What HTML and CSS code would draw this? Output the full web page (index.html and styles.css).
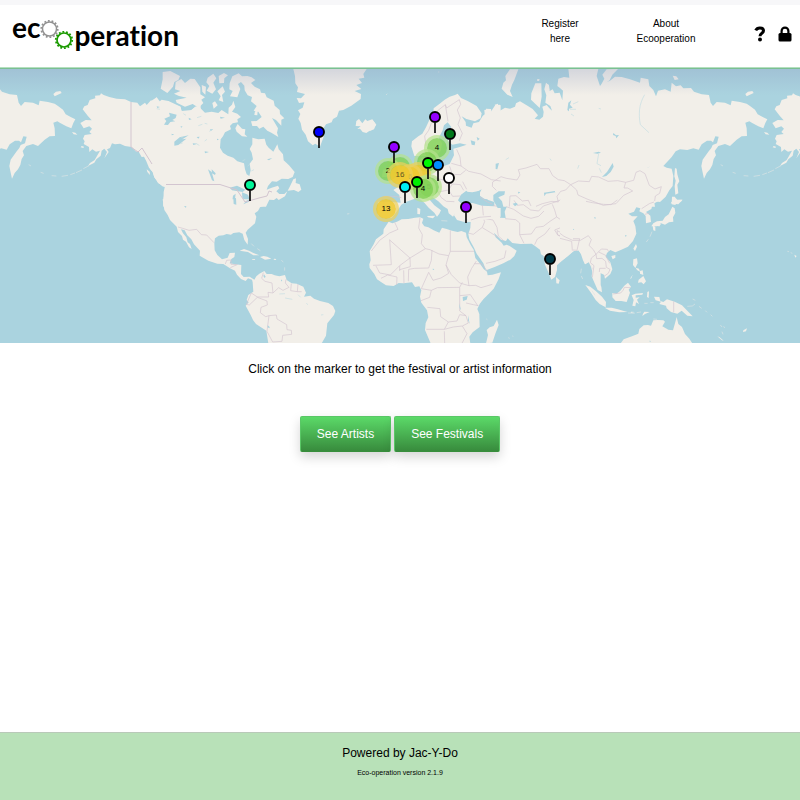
FILE: index.html
```html
<!DOCTYPE html>
<html lang="en">
<head>
<meta charset="utf-8">
<meta name="viewport" content="width=device-width, initial-scale=1">
<title>Ecooperation</title>
<link rel="stylesheet" href="styles.css">
</head>
<body>
<header class="header">
  <a class="logo" href="#" aria-label="Ecooperation home">
    <span class="logo-eco">ec</span>
    <svg class="gears" viewBox="0 0 34 34" aria-hidden="true">
      <g fill="none" stroke="#929292"><circle cx="9.500" cy="11" r="7" stroke-width="1.500"/><circle cx="9.500" cy="11" r="8.200" stroke-width="1.800" stroke-dasharray="1.800 1.880"/></g>
      <g fill="none" stroke="#1b9a00"><circle cx="24" cy="22" r="7" stroke-width="1.700"/><circle cx="24" cy="22" r="8.200" stroke-width="1.800" stroke-dasharray="1.800 1.880"/></g>
    </svg>
    <span class="logo-name">peration</span>
  </a>
  <nav class="nav">
    <a class="nav-link" href="#">Register<br>here</a>
    <a class="nav-link" href="#">About<br>Ecooperation</a>
  </nav>
  <div class="tools">
    <a href="#" aria-label="Help"><svg width="12" height="16" viewBox="0 0 12 16"><path d="M1.700 4.400C2.500 2.700 3.900 1.900 5.800 1.900c2.300 0 3.700 1.200 3.700 2.900C9.500 7.500 6 7 6 10.200" fill="none" stroke="#000" stroke-width="3"/><circle cx="6" cy="13.500" r="2"/></svg></a>
    <a href="#" aria-label="Log in"><svg width="14" height="16" viewBox="0 0 14 16"><path d="M3.600 8V5a3.400 3.400 0 0 1 6.800 0v3" fill="none" stroke="#000" stroke-width="2.200"/><rect x=".5" y="7" width="13" height="8.500" rx="1.500"/></svg></a>
  </div>
</header>
<main class="main">
  <section class="map" aria-label="Festival and artist map">
    <svg class="world" viewBox="0 68 800 275" preserveAspectRatio="xMidYMid slice" aria-hidden="true">
      <defs>
        <g id="siberia" transform="translate(480 66) scale(.33333)">
          <path class="land" d="M0 165L15 155 25 162 45 140 60 134 75 125 90 128 105 122 108 112 120 106 140 118 158 129 174 148 164 158 178 161 189 152 191 138 187 122 200 117 207 125 216 134 211 120 196 110 199 88 193 70 198 50 207 58 209 75 218 70 224 82 239 80 247 103 249 74 240 66 232 60 235 38 252 33 268 35 265 8 355 8 350 30 360 60 373 49 389 45 405 32 425 33 450 40 480 50 482 35 505 40 508 60 520 72 528 91 534 74 555 70 572 77 575 50 588 61 602 58 610 67 633 66 642 77 665 85 687 87 692 110 699 120 710 108 735 110 752 118 755 104 780 108 800 113 810 120 825 131 833 145 848 153 862 160 856 171 850 187 835 181 818 172 808 166 796 170 800 187 801 210 785 211 770 221 750 240 735 234 715 240 704 255 708 268 701 279 697 297 690 310 680 321 672 338 667 315 664 300 668 281 685 257 694 246 698 237 711 232 716 212 706 211 699 229 693 224 681 224 665 235 656 251 640 247 622 252 600 250 587 256 575 273 550 300 560 305 575 308 580 330 578 360 568 373 557 392 540 408 522 405 525 422 0 422Z"/>
          <path class="land" d="M90 10L115 10 103 42 96 56 90 75 98 93 82 86 65 68 70 50 78 43 76 30ZM154 82L166 52 184 52 185 92 179 126 164 112 153 101ZM200 54L206 56 208 72 201 74ZM380 10L414 9 397 26 389 43 360 62 373 38 367 26ZM578 29L589 31 596 40 584 42ZM796 84L804 77 817 75 821 81 808 87 800 91ZM585 306L590 308 592 325 598 346 592 356 595 382 586 386 584 360 587 344 583 331ZM576 392L584 392 592 402 606 401 603 407 591 409 586 417 575 415ZM44 116l10-3 1 7-8 5zM18 128l15 1 2 12-10 11-8-5zM172 39l7 1-2 5-6-1z"/>
        </g>
        <g id="alaska" transform="translate(0 66) scale(.33333)">
          <path class="land" d="M602 422L490 420 490 400 493 385 497 365 488 358 475 352 463 334 458 318 447 305 439 286 432 272 425 273 416 257 407 256 395 243 375 240 360 233 345 235 336 232 330 246 321 250 326 258 313 277 321 258 313 248 305 254 302 269 289 280 283 290 264 300 270 291 284 282 294 265 300 254 288 257 277 250 268 258 267 243 251 234 254 226 249 218 254 207 275 204 268 198 276 188 268 181 251 187 241 171 257 162 275 163 263 149 248 130 253 121 263 117 269 102 286 97 285 89 300 88 303 82 311 87 328 93 350 98 375 100 393 108 412 110 420 121 435 110 440 117 453 103 462 109 470 94 483 111 505 106 520 115 540 122 545 135 575 132 585 122 602 118Z"/>
          <path class="land" d="M488 18L511 15 540 30 535 42 523 48 519 62 502 81 482 68 488 40ZM216 198l10 2 6 6-11-1zM245 240l7 2-2 4-8-2zM440 310l9 7 1 10-8-9zM470 339l12 8 14 17-9-3-14-12z"/>
          <path class="isles" d="M86 296l7 4M122 319l9 3M155 329l14 1M185 331l19-3M211 326l14-5M228 320l18-8M250 308l17-9"/>
        </g>
        <g id="pin"><path d="M6 12v10" stroke="#111" stroke-width="1.700"/><circle cx="6" cy="6" r="5" stroke="#000" stroke-width="1.900"/></g>
        <linearGradient id="shade" x2="0" y2="1"><stop stop-color="#8b98bd" stop-opacity=".3"/><stop offset="1" stop-color="#8b98bd" stop-opacity="0"/></linearGradient>
      </defs>
      <rect x="-800" y="68" width="2400" height="275" fill="#aad3df"/>
      <use href="#siberia"/><use href="#siberia" x="-692"/>
      <use href="#alaska"/><use href="#alaska" x="692"/>

      <!-- Canada, Greenland and Iceland -->
      <g transform="translate(150 66) scale(.33333)">
        <path class="land" d="M0 107L20 94 26 109 35 101 55 105 70 112 92 122 95 137 120 135 132 126 150 125 165 140 185 137 205 141 215 132 235 145 236 125 246 116 250 104 256 123 246 137 262 143 273 153 262 160 264 169 248 172 240 180 243 190 225 199 219 211 212 220 210 245 219 260 233 269 250 275 262 286 282 292 285 310 290 325 298 330 302 313 299 293 309 280 305 260 299 249 307 235 307 215 325 220 344 218 349 236 356 245 370 257 376 246 382 235 386 250 399 265 401 283 417 298 434 318 428 333 415 339 395 338 380 347 366 346 354 360 350 371 365 365 384 359 388 367 379 376 388 384 403 384 412 376 405 391 386 402 380 396 372 402 358 401 348 422 40 422 41 378 45 360 38 352 25 348 13 334 8 318 0 308Z"/>
        <path class="land" d="M77 48L94 39 105 51 121 38 134 39 151 64 151 85 165 94 154 101 160 111 146 125 128 114 105 122 80 110 77 102 110 95 87 90 72 83 91 75 75 70ZM239 52L247 31 266 22 276 31 292 30 305 34 316 42 303 51 314 62 330 70 333 80 345 82 350 94 371 104 374 119 389 132 390 144 403 157 394 161 394 179 378 162 366 156 384 187 381 200 385 213 364 200 352 194 340 182 328 188 321 180 307 180 303 166 320 165 335 153 325 137 311 134 320 120 303 106 306 93 293 88 284 73 283 59 273 48 264 54 271 69 262 94 240 91 248 75 238 70ZM173 35L190 23 199 37 190 50 198 70 187 83 170 74 178 60 169 49ZM206 30L222 21 234 28 223 37 222 51 208 52ZM202 76L218 61 225 77 216 87 220 108 206 103 212 91ZM155 57L168 62 166 86 157 77ZM187 111L195 106 203 118 191 128ZM263 174L276 188 286 190 284 205 292 212 276 211 260 197 256 187ZM315 136L323 133 322 148 313 147ZM430 340L438 337 437 351 449 355 454 371 445 378 432 372 413 374 420 361Z"/>
        <path class="land" d="M430 9L650 9 640 24 643 35 626 38 636 51 619 57 634 69 614 75 633 84 632 99 604 119 580 132 567 134 561 152 549 159 545 169 528 175 519 190 521 212 510 242 496 233 488 238 474 226 467 206 456 191 452 171 445 158 451 144 444 133 458 125 463 109 447 111 440 96 453 97 465 84 441 78 444 64 436 52 435 30ZM619 165L627 159 637 172 646 160 652 165 667 160 679 176 670 187 649 201 638 198 630 188 622 189 632 181 617 180Z"/>
        <path class="lake" d="M43 158l17-7-3-11 23 6-3 10-10 6 9 4-15 2-7 9-12-1 7-11zM73 227l16-13 27-6-19 12 12-2-24 19-12 2zM174 310l11 8 8 28-7-3-8-22zM185 310l12 12-2 5-9-5zM210 152l15 3-13 3zM116 155l9 5-8 2zM128 232l15 1-13 4zM164 256l13 2-12 4zM180 190l10 0-8 5zM239 365l22-6 25 12-8 7-32-5zM257 383l-5 36h-7l4-30zM276 379l18 7 10 25-14-2-13-14zM296 407l20-2 6-4-3 7-24 6zM92 180l6 2-5 3zM140 213l9-1-4 6zM20 121l10 2-8 3zM351 280l16-4-10 7zM65 203l8 3-8 2zM201 218l6 2-6 3z"/>
        <path class="fine-water" d="M20 128l10 2m70 13l8 5m33 7l13-4m-9 28l12-4m7 50l7-5m-31 14l8 4m-55-25l7 4m-9 16l7-2m66-59l8 2m6 22l9-5m90 94l9-5m7 20l6-5m5 20l8-4"/>
      </g>

      <!-- The Americas south of Canada -->
      <g transform="translate(130 200) scale(.33333)">
        <path class="land" d="M98-2L103 30 113 45 120 60 140 80 144 96 156 108 159 119 168 125 177 142 185 147 180 132 173 127 169 112 159 100 153 88 164 91 172 106 184 118 192 133 210 152 209 167 235 182 262 191 280 192 300 205 315 212 321 224 333 237 347 243 354 235 366 239 368 247 370 275 355 285 350 300 356 307 347 317 362 345 369 360 378 372 409 392 415 430 575 430 588 407 592 370 612 345 616 333 609 318 595 309 570 303 552 296 541 287 522 290 528 278 520 260 500 251 485 250 470 240 465 225 448 229 434 226 425 222 410 222 403 213 388 221 379 229 373 239 359 230 341 231 333 222 334 195 315 193 299 190 304 177 313 171 315 158 299 159 293 173 276 178 262 165 254 151 253 130 255 115 266 107 280 106 290 102 303 104 310 99 328 97 338 101 343 120 353 134 354 117 347 98 353 89 375 70 379 50 374 40 384 33 390 22 407 15 411-2Z"/>
        <path class="land" d="M329 152L342 147 357 152 370 159 388 166 370 166 354 156ZM390 171L401 168 412 170 424 176 405 179ZM366 177l8 0 2 3-9-1zM432 176l7 1-2 3-6-1z"/>
        <path class="isles" d="M364 131l8 8m10 7l9 6m63 29l6 5m4 16v10M651 42l7-1"/>
        <path class="border" d="M144 81L158 85 177 91 200 88 214 104 230 105 252 128M286 192L290 181 303 180 303 193 320 194M301 203L323 193M400 218L395 235 405 244 426 249 429 279M468 238L466 249 477 262 459 271 446 263 429 279 414 277 416 291 382 291 364 279 349 313 358 315 382 292 411 303 412 315 393 322 391 338 407 350 417 347 439 345 441 357 470 374 471 389 484 391 485 403 458 406 456 424 428 426 420 411 411 394 417 347M484 251L482 272 502 275 504 252M502 275L515 275"/>
        <path class="lake" d="M402 223l5 7-3 4-4-6zM454 238l3 5-4 1zM413 376l6 5-1 4-5-3zM163 18l6 1-1 4-4-2zM310-5l8-1 1 20-8-2zM340 13l8-10 13-6-4 8z"/>
        <path class="fine-water" d="M465 294l22 4m17-14l8 8m17 18l5 4m39 31l7-1M448 282l17-1"/>
      </g>

      <!-- Africa and southern Asia -->
      <g transform="translate(360 200) scale(.33333)">
        <path class="land" d="M86 65L97 70 111 65 125 58 145 57 165 53 180 52 190 56 186 69 193 79 205 82 221 91 238 98 246 83 260 87 276 92 293 96 304 93 318 98 320 112 332 135 341 149 346 174 359 190 371 207 381 215 383 226 397 224 423 217 416 237 401 266 388 280 370 298 359 312 352 327 358 342 359 381 338 397 328 410 331 430 212 430 195 390 197 369 205 352 201 331 184 308 180 290 184 271 178 259 165 261 156 247 130 250 116 249 101 258 78 256 63 246 51 238 43 222 29 204 28 193 32 181 29 153 41 133 48 118 70 101 71 88Z"/>
        <path class="land" d="M411 359L416 375 406 401 397 428 378 430 384 405 380 390 389 382 401 378ZM286 29L298 26 316 18 342 22 370 22 382 0 407-1 410 16 405 29 421 53 437 54 434 35 441 19 440-1 722-1 722 258 711 250 703 235 698 219 693 200 686 186 675 193 669 181 663 163 656 151 641 153 625 167 604 184 591 196 591 210 585 231 574 239 565 217 555 194 551 168 543 163 540 149 524 137 515 131 481 132 457 129 443 115 438 123 423 119 402 98 407 112 425 128 431 137 440 134 449 138 470 152 463 168 451 179 430 190 404 201 378 211 370 190 350 161 342 143 328 118 325 102 331 84 332 66 310 65 291 60 282 46ZM588 231L599 241 596 251 589 250Z"/>
        <path class="border" d="M104 67L114 88 89 99 59 121 34 153M89 119L94 194 39 196M89 120L150 174 119 197 91 225 59 219 48 198M180 53L176 84 187 104 184 131 196 146 150 174 151 200 119 209M196 146L210 149 237 162 266 167 271 154 271 91M271 154L343 154M216 150L214 181 206 204 164 205 146 208 145 244M266 167L258 195 266 220 243 234 219 241 206 217M258 195L274 224 299 249 327 257 347 256 363 263 397 253M349 183L335 205 323 231 327 257M343 191L365 191 382 213M206 217L184 266 214 271 232 263 299 262 307 247M183 302L209 292 214 271M202 322L240 326 242 350 265 366 253 388 199 388M299 262L299 287 331 284 354 318M299 287L299 333 318 347 299 344 291 363 265 366M318 309L340 314 355 317M318 347L325 369 307 378 280 381 253 388M307 378L321 401 306 430M253 394L254 430M119 197L119 213M63 235L83 225 111 231 110 255M131 211L132 250M324 99L340 103 367 82 374 65 370 54 334 54M370 55L399 60 411 82 415 108 432 123M367 83L392 98 414 112M378 190L405 184 433 174 438 151M435 56L467 59 479 69 479 104 492 130M439 20L461 28 490 48 513 55 536 49 552 33M479 104L514 102 528 82 550 79 570 64 590 51 608 63 620 76 584 90 593 105 625 118 657 119 680 113 692 109M524 134L532 117 555 102 570 83M593 105L591 92 629 110 656 113 659 123 628 119ZM634 121L634 149M658 121L676 133 667 159M679 109L693 125 689 148 681 165 695 180 698 208M462 1L472 16 490 14 512 30 536 33 550 18 574 10 602 0M590 51L584 30 577 13"/>
        <path class="lake" d="M308 291l15-3-3 11-11 4zM298 310l5 21-4-6zM324 346l5 26-5-11zM393 42l5 4-5 2zM218 206l5 1-4 4zM328 0l55-2-6 12-25-4-20 3z"/>
        <path class="isles" d="M445 413l4 2m8-7l3 1m-81-52l3 2"/>
      </g>

      <!-- East Asia and Oceania -->
      <g transform="translate(560 200) scale(.33333)">
        <path class="land" d="M0-1L305-1 290 6 278 13 274 27 258 36 271 47 273 66 258 70 257 48 250 40 238 34 241 25 229 22 222 35 205 41 216 49 233 49 220 63 226 78 229 101 219 123 204 140 184 149 166 157 151 150 141 159 137 170 151 187 157 208 151 222 135 236 132 224 119 218 108 204 102 218 106 230 116 246 124 260 126 277 113 270 100 241 95 229 98 208 92 187 85 187 75 193 70 169 55 151 40 154 20 170 0 187Z"/>
        <path class="land" d="M337 20L344 25 346 39 339 52 340 65 327 67 315 74 303 70 292 79 274 79 280 70 291 64 308 62 315 51 326 43 332 31ZM332 10L340-1 368-1 355 13 341 11ZM278 78l8 2 0 13-6-2zM292 73l11-1-6 8zM228 132l3 8-6 13-5-7zM154 168l12-3 0 8-8 5zM220 178L231 175 233 190 226 204 219 195ZM236 239L250 228 258 244 251 253 244 247 234 248ZM227 203l10 3 3 9-9-5zM240 213l8-2 2 14-10-4zM76 255L91 260 108 274 126 290 138 306 137 322 119 312 107 300 93 278ZM134 323L155 323 174 328 189 332 203 336 178 337 150 332ZM157 279L170 281 181 272 193 257 204 248 213 260 206 269 210 278 200 306 184 303 167 303 157 292ZM215 286L226 281 249 279 247 284 227 286 227 293 239 292 231 299 237 312 228 307 226 319 217 317 221 300ZM282 290L298 291 301 303 310 306 321 298 344 305 366 316 376 326 398 349 382 347 365 332 352 341 333 336 320 325 318 317 298 312 303 305 287 301ZM182 430L191 418 216 409 235 401 238 387 251 376 264 375 273 377 280 361 293 360 310 361 315 365 307 379 325 389 339 391 345 370 350 351 355 372 366 381 375 402 388 416 397 430ZM472 409l7 3 12 10-5-1zM550 391l11-6-3 9-9 2zM210 236l8-12-4 11zM262 276l5-2-1 20-5-3zM213 335l12 1-13 3zM253 335l16 1-14 6-8 6 2-7zM703 164l7 4-4 5z"/>
        <path class="isles" d="M382 319l15-1 8-6m-7-15l8 4m11 18l8 6m11 7l5 5m11 7l5 5m24 26l5 6m0 14l3 8m2-24l3 5M204 339l20 1m6-2l13-2m10-26h10m8-2h10M64 206l-2 14m2 8l4 9M96 272l9 14m175 71l11 1M682 154l5 1m5 3l5 2M276 95l-6 15m-5 8l-6 8"/>
        <path class="border" d="M78 4L97 8 130 13 153 14 172 0M245 26L268 11 282 6M255 43L269 39M0 100L12 109 38 121 61 121 85 107 94 119 87 136 100 149 108 163 124 147 142 148 146 155M0 115L35 124 37 152M39 116L59 116 51 151 39 150M108 163L94 174 91 188 102 197 97 232M108 162L110 176 126 175 137 184 139 202 150 208 145 220 132 229M118 216L119 205 137 205M116 156L137 166 149 190M159 282L182 279 190 270 193 262 211 263M341 304L341 337"/>
        <path class="lake" d="M102 51l6 2-3 4zM195 105l6 2-5 3zM39 86l4 3-4 1zM268 422l5 1-3 3z"/>
      </g>

      <!-- Europe -->
      <g transform="translate(370 66) scale(.33333)">
        <path class="land" d="M133 270L124 241 126 226 145 211 157 203 168 184 178 162 190 141 191 127 209 113 224 101 239 92 255 87 263 83 273 96 293 105 320 120 335 142 332 157 315 166 289 159 275 151 287 168 288 179 305 185 310 172 327 168 338 150 344 145 343 132 357 130 356 147 374 120 388 116 392 118 392 272Z"/>
        <path class="land" d="M25 407L60 407 92 410 88 387 70 372 85 362 100 357 115 337 140 322 150 307 148 282 160 272 165 297 180 307 215 300 235 292 240 262 260 247 392 210 392 424 375 418 364 408 345 392 355 381 342 386 326 375 307 379 290 377 276 387 268 401 272 411 307 405 341 403 392 410 392 452 340 461 299 459 278 451 269 429 258 437 249 452 236 442 233 429 220 421 205 406 188 394 179 401 193 418 213 433 208 443 201 452 193 440 176 425 163 410 145 395 135 398 109 407 94 416 79 439 65 456 41 457 24 447 22 429ZM68 276L83 286 84 302 101 324 96 337 65 342 77 330 65 319 73 307 62 295ZM39 312L55 305 59 321 50 334 36 332ZM142 425l9 4-1 16-8-1zM171 450l25-1-7 8-15-3zM0 165l10 0 8 11-6 14-14 6z"/>
        <path class="lake" d="M233 169L244 183 236 198 234 225 247 236 270 232 290 236 267 244 250 248 252 268 239 294 215 302 199 298 191 283 199 268 212 255 216 231 206 216 218 193 222 178ZM302 223l14 4-2 11-9-2zM320 213l9 5-6 6z"/>
        <path class="lake" d="M264 403L273 386 289 374 298 384 320 378 335 370 326 387 343 398 373 408 373 421 336 419 308 411 278 417Z"/>
        <path class="border" d="M168 240L164 210 176 193 187 163 203 134 226 116 230 126 251 112 268 101 272 115 262 132 271 156 264 175 277 202 268 224M226 116L234 166M260 250L270 273 273 300 296 316 333 324 364 341 392 345M244 292L273 300M239 301L247 325 232 344 197 337 178 325 185 303M197 337L175 350 171 375 149 387M232 344L247 354 236 372 205 378 181 378M247 354L271 356 281 373M236 372L248 391 271 390M205 378L213 394 229 406 253 407M247 325L271 326 287 313M165 297L151 316 134 329 146 347 137 370M94 395L75 391 42 391 41 438M278 347L290 370M337 417L340 448M303 462L327 454 363 451M369 418L392 424"/>
        <path class="isles" d="M48 87l4-4m152-65l4 0M214 464l18 1m48-2l14-2"/>
      </g>

      <!-- Inland waters and borders of northern Asia -->
      <g transform="translate(480 66) scale(.33333)">
        <path class="lake" d="M398 291l3 11-9 16-13 12-13 3 15-15zM40 387l16-11 19 0-2 10-18 8 11 12 5 20H53L40 403zM192 380l32-5 2 4-28 4-5 8zM400 201l8 7 9-1-8 10-2-7-8-3zM339 261l17-4 7 3-11 3zM98 413l10-3 6 5-9 6zM502 306l8-5-7 5zM47 293l10-2-5 19-5-1zM274 103l-4 13 8 9-11 3 0 8-5-4 3-22zM114 377l7 2-6 4z"/>
        <path class="fine-water" d="M494 86C477 114 475 144 481 176L507 200M356 263L351 293 363 299M358 307l6 13M270 130l18 0m-15 14l9 6M356 127l7 2m-84-15l16-7M297 297l-4 11m-83-30l4 6M77 281l10-6"/>
        <path class="border" d="M0 393L22 408 37 414M49 373L37 361 38 348 63 332 79 337 111 342 120 327 115 311 138 306 171 295 181 308 207 308 218 329 235 341 253 344 272 356 295 345 328 347 335 331 356 333 384 346 413 344 437 349 461 343 468 319 480 314 495 323 508 358 525 369 544 362 539 382 526 390 524 405M272 356L257 372 242 376 231 391 235 408 216 406 187 413 168 421M272 356L290 372 294 387 321 399 370 418 408 413 431 388 458 375 443 366 432 366 437 349M88 422L90 390 108 389 127 405 145 403 153 420"/>
      </g>
      <path class="border" d="M131 102V147L138 152 142 148 147 156 152 164M166 184.500H220M220 184.500L237 190 245 202M245 202L259 198 267 196 269 191 272 192"/>
      <rect x="-800" y="68" width="2400" height="27" fill="url(#shade)"/>
    </svg>

    <button class="cluster few" style="left:50%;top:99px" aria-label="Cluster"></button>
    <button class="cluster few" style="left:48.500%;top:103px">2</button>
    <button class="cluster few" style="left:54.625%;top:80px">4</button>
    <button class="cluster few" style="left:53.375%;top:94px" aria-label="Cluster"></button>
    <button class="cluster many faded" style="left:52.250%;top:107px" aria-label="Cluster"></button>
    <button class="cluster many faded" style="left:51.250%;top:109px">6</button>
    <button class="cluster many" style="left:50%;top:107px"><span class="muted">16</span></button>
    <button class="cluster few faded" style="left:53.625%;top:119px">5</button>
    <button class="cluster few" style="left:52.875%;top:121px">4</button>
    <button class="cluster many" style="left:48.250%;top:141px">13</button>

    <button class="pin" style="left:54.375%;top:49px" aria-label="Marker"><svg width="12" height="22" fill="#9400ff"><use href="#pin"/></svg></button>
    <button class="pin" style="left:31.250%;top:117px" aria-label="Marker"><svg width="12" height="22" fill="#00f598"><use href="#pin"/></svg></button>
    <button class="pin" style="left:39.875%;top:64px" aria-label="Marker"><svg width="12" height="22" fill="#0000fa"><use href="#pin"/></svg></button>
    <button class="pin" style="left:49.250%;top:79px" aria-label="Marker"><svg width="12" height="22" fill="#9400ff"><use href="#pin"/></svg></button>
    <button class="pin" style="left:56.250%;top:66px" aria-label="Marker"><svg width="12" height="22" fill="#007719"><use href="#pin"/></svg></button>
    <button class="pin" style="left:53.500%;top:95px" aria-label="Marker"><svg width="12" height="22" fill="#00f800"><use href="#pin"/></svg></button>
    <button class="pin" style="left:54.750%;top:97px" aria-label="Marker"><svg width="12" height="22" fill="#008cff"><use href="#pin"/></svg></button>
    <button class="pin" style="left:56.125%;top:110px" aria-label="Marker"><svg width="12" height="22" fill="#fff"><use href="#pin"/></svg></button>
    <button class="pin" style="left:52.125%;top:114px" aria-label="Marker"><svg width="12" height="22" fill="#00f000"><use href="#pin"/></svg></button>
    <button class="pin" style="left:50.625%;top:119px" aria-label="Marker"><svg width="12" height="22" fill="#00eff5"><use href="#pin"/></svg></button>
    <button class="pin" style="left:58.250%;top:139px" aria-label="Marker"><svg width="12" height="22" fill="#9400ff"><use href="#pin"/></svg></button>
    <button class="pin" style="left:68.750%;top:191px" aria-label="Marker"><svg width="12" height="22" fill="#003c4b"><use href="#pin"/></svg></button>
  </section>
  <p class="hint">Click on the marker to get the festival or artist information</p>
  <div class="actions">
    <button class="action">See Artists</button>
    <button class="action">See Festivals</button>
  </div>
</main>
<footer class="footer">
  <p class="powered">Powered by Jac-Y-Do</p>
  <p class="version">Eco-operation version 2.1.9</p>
</footer>
</body>
</html>
```
FILE: styles.css
```css
* { box-sizing: border-box; }

body {
  margin: 0;
  min-height: 100vh;
  display: flex;
  flex-direction: column;
  font-family: "Liberation Sans", Arial, sans-serif;
  font-size: 12px;
  color: #000;
  background: #fff;
}

a { color: inherit; text-decoration: none; }
button { font: inherit; color: inherit; border: 0; padding: 0; cursor: pointer; }
p { margin: 0; }

.header {
  position: relative;
  z-index: 1;
  display: flex;
  align-items: flex-start;
  height: 68px;
  padding: 0 8px 0 12px;
  border-top: 5px solid #f7f7f9;
  border-bottom: 1px solid #b4dfc0;
  box-shadow: 0 1px 0 #7abf92;
}

.logo {
  display: flex;
  margin-right: auto;
  padding-top: 6px;
  font-family: Lato, sans-serif;
  font-size: 28px;
  font-weight: 700;
  font-variant-ligatures: none;
  line-height: 32px;
}
.gears { width: 34px; height: 34px; margin-top: 7px; }
.logo-name { padding-top: 8px; }

.nav { display: flex; padding-top: 11px; }
.nav-link {
  width: 106px;
  font-size: 10px;
  line-height: 15px;
  text-align: center;
}

.tools { display: flex; gap: 12px; padding: 21px 0 0 35px; }
.tools svg { display: block; }

.main { flex: 1; }

.map { position: relative; height: 275px; overflow: hidden; }
.world { display: block; width: 100%; height: 100%; }
.land { fill: #f2efe9; }
.lake { fill: #aad3df; }
.isles { fill: none; stroke: #dce4e4; stroke-width: 2; }
.fine-water { fill: none; stroke: #c4dee3; stroke-width: 2; }
.border { fill: none; stroke: #d3c5d0; stroke-width: 2; }
.world > .border { stroke-width: 1; }

.cluster {
  position: absolute;
  width: 20px;
  height: 20px;
  margin: -10px 0 0 -10px;
  border-radius: 50%;
  font-size: 8px;
  line-height: 20px;
  text-align: center;
}
.few { background: rgba(132, 210, 88, .85); box-shadow: 0 0 0 3px rgba(181, 226, 140, .7); }
.many { background: rgba(240, 202, 50, .9); box-shadow: 0 0 0 3px rgba(236, 208, 90, .7); }
.faded { color: #6f7e55; }
.muted { color: #5d5423; }

.pin {
  position: absolute;
  width: 12px;
  height: 22px;
  margin: -6px 0 0 -6px;
  background: none;
}
.pin svg { display: block; }

.hint { padding-top: 18px; line-height: 16px; text-align: center; }

.actions {
  display: flex;
  justify-content: center;
  gap: 3px;
  padding-top: 39px;
}
.action {
  height: 36px;
  padding: 0 16px;
  border: 1px solid #5ac766;
  border-bottom-color: #388e3c;
  border-radius: 2px;
  color: #fff;
  background: linear-gradient(#5bd968, #388b3d);
  box-shadow: 0 5px 12px rgba(0, 0, 0, .17);
}

.footer {
  min-height: 68px;
  padding-top: 12px;
  border-top: 1px solid #b9c9b9;
  background: #b8e1b8;
  text-align: center;
}
.powered { line-height: 16px; }
.version { padding-top: 7px; font-size: 7px; line-height: 10px; }
```
